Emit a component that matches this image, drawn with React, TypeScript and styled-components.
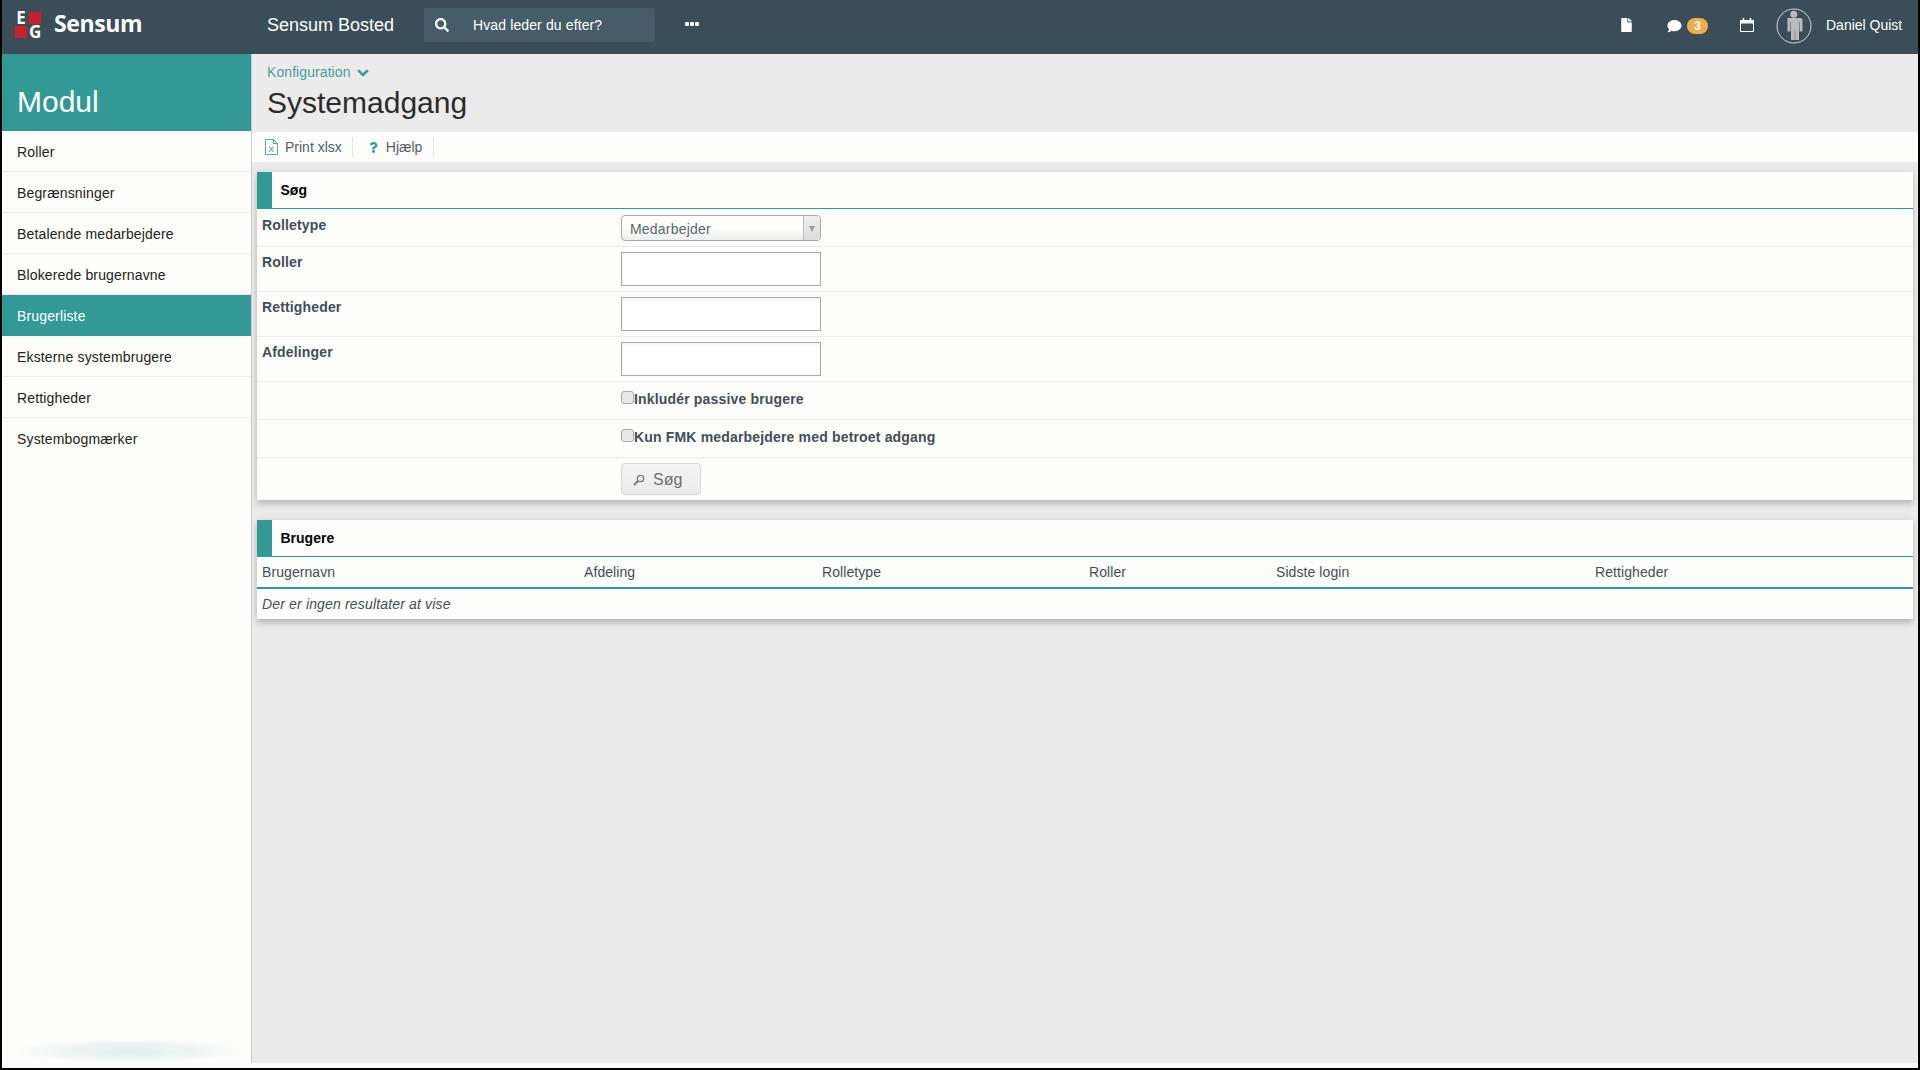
import React from "react";
import styled, { createGlobalStyle } from "styled-components";
import { FaComment, FaFile, FaSearch, FaChevronDown, FaQuestion } from "react-icons/fa";

const Global = createGlobalStyle`
  html, body { margin: 0; padding: 0; background: #000; }
  body { font-family: "Liberation Sans", Arial, sans-serif; font-size: 14px; overflow: hidden; }
  * { box-sizing: border-box; }
`;

const Frame = styled.div`
  width: 1920px; height: 1070px; background: #000;
  padding: 0 2px 2px 2px; overflow: hidden;
`;
const Page = styled.div`
  width: 1916px; height: 1068px; background: #ebebeb;
  display: grid; grid-template-rows: 54px 1fr 5px;
`;
const FooterStrip = styled.div`background: #fdfdfb;`;
const TopBar = styled.header`
  position: relative; background: #3a4d59; color: #fff;
  display: flex; align-items: center; height: 54px;
`;
const Logo = styled.div`
  position: absolute; left: 13px; top: 12px; width: 26px; height: 26px;
  display: grid; grid-template-columns: 12px 12px; grid-template-rows: 12px 12px; gap: 2px;
`;
const LogoRed = styled.span`background: #c8202f;`;
const LogoLetter = styled.span`
  color: #fff; font: 700 17px/12px "Open Sans", sans-serif; text-align: center;
`;
const Brand = styled.div`
  position: absolute; left: 52px; top: 8px;
  font: 700 23px/30px "Open Sans", sans-serif; letter-spacing: -0.4px;
`;
const AppName = styled.div`position: absolute; left: 265px; top: 14px; font-size: 18px; line-height: 22px;`;
const SearchBox = styled.div`
  position: absolute; left: 422px; top: 8px; width: 231px; height: 34px;
  background: #475c69; border-radius: 2px; display: flex; align-items: center;
  padding-left: 11px; font-size: 14px; letter-spacing: 0.12px;
  svg { width: 14px; height: 14px; margin-right: 24px; }
`;
const Dots = styled.div`
  position: absolute; left: 683px; top: 22px; display: flex; gap: 1px;
  span { width: 4px; height: 4px; background: #fff; border-radius: 1px; }
`;
const TopIcon = styled.span<{ $left: number; $top: number; $w: number; $h: number }>`
  position: absolute; left: ${p => p.$left}px; top: ${p => p.$top}px; display: block; line-height: 0;
  svg { width: ${p => p.$w}px; height: ${p => p.$h}px; display: block; }
`;
const Badge = styled.span`
  position: absolute; left: 1685px; top: 18px; width: 21px; height: 16px; border-radius: 8px;
  background: #f0ad4e; color: #fff; font-size: 12px; font-weight: 700; line-height: 16px; text-align: center;
`;
const Avatar = styled.svg`position: absolute; left: 1773.5px; top: 7.5px; width: 36px; height: 36px;`;
const UserName = styled.div`position: absolute; left: 1824px; top: 17px; font-size: 14px; line-height: 16px;`;

const Body = styled.div`display: grid; grid-template-columns: 250px 1fr; min-height: 0;`;
const Sidebar = styled.aside`
  position: relative; background: #fdfdfb; border-right: 1px solid #ccc; overflow: hidden;
`;
const ModuleTitle = styled.div`
  height: 77px; background: #339997; color: #fff; font-size: 30px; line-height: 34px;
  padding: 31px 0 0 15px;
`;
const NavList = styled.nav`display: flex; flex-direction: column;`;
const NavItem = styled.a<{ $active?: boolean }>`
  display: block; height: 41px; line-height: 42px; padding-left: 15px; font-size: 14px; letter-spacing: 0.15px;
  color: ${p => (p.$active ? "#fff" : "#222")};
  background: ${p => (p.$active ? "#339997" : "transparent")};
  border-bottom: 1px solid ${p => (p.$active ? "#339997" : "#ebebeb")};
  &:last-child { border-bottom: none; }
`;
const Glow = styled.div`
  position: absolute; left: 16px; bottom: 0; width: 222px; height: 24px;
  background: radial-gradient(ellipse at center, #dfeeed 0%, #eef6f5 45%, rgba(253,253,251,0) 72%);
`;

const Main = styled.main`display: flex; flex-direction: column; min-width: 0;`;
const TitleArea = styled.div`height: 78px; padding: 10px 0 0 15px;`;
const Crumb = styled.div`
  color: #4c9c9a; font-size: 14px; line-height: 16px; display: flex; align-items: center; gap: 5px; letter-spacing: 0.08px;
  svg { width: 14px; height: 12px; color: #339997; margin-top: 2px; stroke: currentColor; stroke-width: 40; }
`;
const Title = styled.h1`
  margin: 5px 0 0; font-weight: 400; font-size: 30px; line-height: 36px; color: #2b2b2b;
`;
const Toolbar = styled.div`
  height: 30px; background: #fdfdfb; display: flex; align-items: center; padding-left: 13px;
`;
const ToolItem = styled.div<{ $end: number }>`
  height: 20px; display: flex; align-items: center; color: #545e68; font-size: 14px;
  padding-right: ${p => p.$end}px; border-right: 1px solid #e6e6e6; margin-right: 15px;
`;
const ToolIcon = styled.span<{ $gap: number }>`
  display: inline-flex; margin-right: ${p => p.$gap}px; color: #339997;
  svg { display: block; }
`;
const Panel = styled.section<{ $top: number }>`
  margin: ${p => p.$top}px 5px 0 5px; background: #fdfdfb;
  box-shadow: 0 4px 6px rgba(0,0,0,.22), 0 -3px 6px rgba(0,0,0,.04);
`;
const PanelHead = styled.div`
  height: 37px; border-bottom: 1px solid #339997; border-left: 15px solid #339997;
  padding-left: 8.500px; font-weight: 700; font-size: 14px; line-height: 36px; color: #000;
`;
const FormRow = styled.div<{ $h: number; $pad: number; $last?: boolean }>`
  height: ${p => p.$h}px; padding-top: ${p => p.$pad}px; padding-left: 5px;
  display: grid; grid-template-columns: 359px 1fr;
  border-bottom: ${p => (p.$last ? "none" : "1px solid #ebebeb")};
`;
const Label = styled.div`font-weight: 700; font-size: 14px; line-height: 20px; color: #454d58; letter-spacing: 0.15px;`;
const SelectBox = styled.div`
  width: 200px; height: 26px; border: 1px solid #aaa; border-radius: 4px;
  background: linear-gradient(#fff, #fdfdfb 50%, #eee); color: #5b6670; font-size: 14px;
  line-height: 27px; padding-left: 8px; position: relative; letter-spacing: 0.2px;
`;
const SelectBtn = styled.span`
  position: absolute; right: 0; top: 0; bottom: 0; width: 17px;
  border-left: 1px solid #bbb; background: linear-gradient(#eee, #ddd);
  border-radius: 0 3px 3px 0;
  &::after {
    content: ""; position: absolute; left: 5px; top: 10px;
    border: 3px solid transparent; border-top: 6px solid #999; border-bottom: 0;
  }
`;
const TextInput = styled.div`
  width: 200px; height: 34px; border: 1px solid #aaa; background: #fff;
  box-shadow: inset 0 1px 3px rgba(0,0,0,.06);
`;
const CheckLine = styled.label`
  display: flex; align-items: flex-start; font-weight: 700; font-size: 14px; line-height: 16px;
  color: #454d58; letter-spacing: 0.17px;
`;
const Check = styled.span`
  width: 13px; height: 13px; border: 1px solid #aaa; border-radius: 3px; background: #e8e8e8;
  flex: none;
`;
const SearchButton = styled.div`
  width: 80px; height: 32px; border: 1px solid #d8d8d8; border-radius: 4px;
  background: linear-gradient(#f4f4f4, #ececec); color: #6a6f75; font-size: 16px;
  display: flex; align-items: center; padding: 1px 0 0 11px; gap: 8px;
  svg { width: 12px; height: 12px; }
`;
const TableHead = styled.div`
  height: 32px; border-bottom: 2px solid #339997;
  display: grid; grid-template-columns: 322px 238px 267px 187px 319px 1fr; padding-left: 5px;
  line-height: 30px; color: #454d58; font-size: 14px; letter-spacing: 0.08px;
`;
const Empty = styled.div`
  height: 30px; line-height: 30px; padding-left: 5px; font-style: italic; color: #454d58; font-size: 14px; letter-spacing: 0.16px;
`;

const nav = ["Roller", "Begrænsninger", "Betalende medarbejdere", "Blokerede brugernavne", "Brugerliste", "Eksterne systembrugere", "Rettigheder", "Systembogmærker"];
const cols = ["Brugernavn", "Afdeling", "Rolletype", "Roller", "Sidste login", "Rettigheder"];

export default function App() {
  return (
    <Frame>
      <Global />
      <Page>
        <TopBar>
          <Logo>
            <LogoLetter>E</LogoLetter><LogoRed /><LogoRed /><LogoLetter>G</LogoLetter>
          </Logo>
          <Brand>Sensum</Brand>
          <AppName>Sensum Bosted</AppName>
          <SearchBox><FaSearch />Hvad leder du efter?</SearchBox>
          <Dots><span /><span /><span /></Dots>
          <TopIcon $left={1618} $top={18} $w={13} $h={14}><FaFile /></TopIcon>
          <TopIcon $left={1665} $top={19} $w={15} $h={14}><FaComment /></TopIcon>
          <Badge>3</Badge>
          <TopIcon $left={1738} $top={18} $w={14} $h={14}>
            <svg viewBox="0 0 14 14" fill="none" stroke="#fff">
              <rect x=".5" y="2.500" width="13" height="11" strokeWidth="1" />
              <path d="M0 3h14v2.500H0z" fill="#fff" stroke="none" />
              <path d="M3.500 0v3M10.500 0v3" strokeWidth="1.600" />
            </svg>
          </TopIcon>
          <Avatar viewBox="0 0 36 36">
            <circle cx="18" cy="18" r="17" fill="none" stroke="#d5d8da" strokeWidth="1" />
            <circle cx="17.800" cy="6.200" r="3.500" fill="#b9bcbe" />
            <path d="M11.500 10h13a2 2 0 0 1 2 2v11.500h-3V14h-.5v18h-3.800v-10h-.4v10H15v-18h-.5v9.500h-3V12a2 2 0 0 1 0-2z" fill="#b9bcbe" />
          </Avatar>
          <UserName>Daniel Quist</UserName>
        </TopBar>
        <Body>
          <Sidebar>
            <ModuleTitle>Modul</ModuleTitle>
            <NavList>
              {nav.map(n => <NavItem key={n} $active={n === "Brugerliste"}>{n}</NavItem>)}
            </NavList>
            <Glow />
          </Sidebar>
          <Main>
            <TitleArea>
              <Crumb>Konfiguration <FaChevronDown /></Crumb>
              <Title>Systemadgang</Title>
            </TitleArea>
            <Toolbar>
              <ToolItem $end={10}>
                <ToolIcon $gap={7}>
                  <svg width="13" height="16" viewBox="0 0 13 16" fill="none" stroke="#5aa5a5" strokeWidth="1">
                    <path d="M.5.500h8l4 4v11H.5zM8.500.500v4h4" />
                    <path d="M4 7.500l4.500 5.500M8.500 7.500L4 13" strokeWidth="1.100" />
                  </svg>
                </ToolIcon>
                Print xlsx
              </ToolItem>
              <ToolItem $end={11}>
                <ToolIcon $gap={7}><FaQuestion size={11} /></ToolIcon>
                Hjælp
              </ToolItem>
            </Toolbar>
            <Panel $top={10}>
              <PanelHead>Søg</PanelHead>
              <FormRow $h={38} $pad={6}>
                <Label>Rolletype</Label>
                <SelectBox>Medarbejder<SelectBtn /></SelectBox>
              </FormRow>
              <FormRow $h={45} $pad={5}><Label>Roller</Label><TextInput /></FormRow>
              <FormRow $h={45} $pad={5}><Label>Rettigheder</Label><TextInput /></FormRow>
              <FormRow $h={45} $pad={5}><Label>Afdelinger</Label><TextInput /></FormRow>
              <FormRow $h={38} $pad={9}><span /><CheckLine><Check />Inkludér passive brugere</CheckLine></FormRow>
              <FormRow $h={38} $pad={9}><span /><CheckLine><Check />Kun FMK medarbejdere med betroet adgang</CheckLine></FormRow>
              <FormRow $h={42} $pad={5} $last>
                <span />
                <SearchButton>
                  <svg viewBox="0 0 12 12" fill="none" stroke="#777" strokeWidth="1.300">
                    <circle cx="7.500" cy="4.500" r="3.200" />
                    <path d="M5 7L1 11" strokeWidth="1.800" />
                  </svg>
                  Søg
                </SearchButton>
              </FormRow>
            </Panel>
            <Panel $top={20}>
              <PanelHead>Brugere</PanelHead>
              <TableHead>{cols.map(c => <span key={c}>{c}</span>)}</TableHead>
              <Empty>Der er ingen resultater at vise</Empty>
            </Panel>
          </Main>
        </Body>
        <FooterStrip />
      </Page>
    </Frame>
  );
}
